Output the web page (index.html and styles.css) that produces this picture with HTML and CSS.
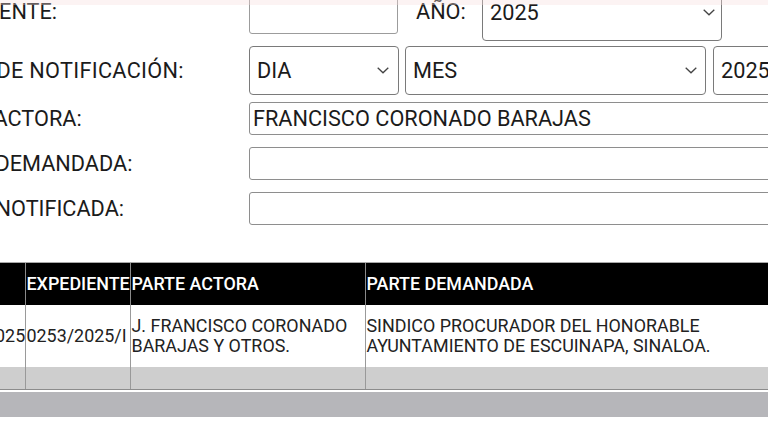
FILE: index.html
```html
<!DOCTYPE html>
<html lang="es">
<head>
<meta charset="utf-8">
<title>Notificaciones</title>
<link rel="stylesheet" href="styles.css">
</head>
<body>
<div class="topband"></div>
<div class="form">
  <div class="row row1">
    <div class="label l1">EXPEDIENTE:</div>
    <div class="input in-exp"></div>
    <div class="label-ano">AÑO:</div>
    <div class="select sel-ano"><span>2025</span><svg class="chev" width="12" height="7" viewBox="0 0 12 7"><polyline points="0.7,0.7 6,5.8 11.3,0.7" fill="none" stroke="#444" stroke-width="1.3"/></svg></div>
  </div>
  <div class="row row2">
    <div class="label l2">FECHA DE NOTIFICACIÓN:</div>
    <div class="select sel-dia"><span>DIA</span><svg class="chev" width="12" height="7" viewBox="0 0 12 7"><polyline points="0.7,0.7 6,5.8 11.3,0.7" fill="none" stroke="#444" stroke-width="1.3"/></svg></div>
    <div class="select sel-mes"><span>MES</span><svg class="chev" width="12" height="7" viewBox="0 0 12 7"><polyline points="0.7,0.7 6,5.8 11.3,0.7" fill="none" stroke="#444" stroke-width="1.3"/></svg></div>
    <div class="select sel-yr"><span>2025</span><svg class="chev" width="12" height="7" viewBox="0 0 12 7"><polyline points="0.7,0.7 6,5.8 11.3,0.7" fill="none" stroke="#444" stroke-width="1.3"/></svg></div>
  </div>
  <div class="row row3">
    <div class="label l3">PARTE ACTORA:</div>
    <div class="input wide">FRANCISCO CORONADO BARAJAS</div>
  </div>
  <div class="row row4">
    <div class="label">PARTE DEMANDADA:</div>
    <div class="input wide"></div>
  </div>
  <div class="row row5">
    <div class="label">PARTE NOTIFICADA:</div>
    <div class="input wide"></div>
  </div>
</div>
<table class="results">
  <colgroup>
    <col class="c1"><col class="c2"><col class="c3"><col class="c4"><col class="c5">
  </colgroup>
  <thead>
    <tr><th></th><th>EXPEDIENTE</th><th>PARTE ACTORA</th><th>PARTE DEMANDADA</th><th></th></tr>
  </thead>
  <tbody>
    <tr class="data">
      <td class="yr">2025</td>
      <td>0253/2025/I</td>
      <td>J. FRANCISCO CORONADO BARAJAS Y OTROS.</td>
      <td>SINDICO PROCURADOR DEL HONORABLE AYUNTAMIENTO DE ESCUINAPA, SINALOA.</td>
      <td></td>
    </tr>
    <tr class="empty"><td></td><td></td><td></td><td></td><td></td></tr>
  </tbody>
</table>
<div class="footbar"></div>
</body>
</html>
```

FILE: styles.css
```css
html, body {
  margin: 0;
  padding: 0;
  background: #ffffff;
  overflow: hidden;
  width: 768px;
  height: 432px;
}
body {
  font-family: Roboto, "Liberation Sans", sans-serif;
  color: #1b1b1b;
  position: relative;
}
.topband {
  position: absolute;
  left: 0;
  top: 0;
  width: 768px;
  height: 5px;
  background: rgba(246, 222, 222, 0.35);
  z-index: 5;
}
.form {
  margin-left: -74px;
  margin-top: -17px;
  font-size: 21.7px;
  width: 1000px;
}
.row {
  display: flex;
  align-items: center;
}
.label {
  width: 323px;
  flex: none;
  white-space: nowrap;
  line-height: 25px;
}
.row1 {
  height: 58px;
  align-items: flex-start;
}
.row1 .l1 {
  margin-top: 16px;
  text-indent: 1px;
}
.l2 {
  text-indent: -5px;
  letter-spacing: 0.3px;
}
.l3 {
  text-indent: -2px;
}
.in-exp {
  margin-top: 9px;
  width: 149px;
  height: 42px;
}
.label-ano {
  margin-left: 18px;
  margin-top: 16px;
  line-height: 25px;
  width: 66px;
  flex: none;
}
.sel-ano {
  width: 240px;
  height: 58px;
}
.row2 {
  margin-top: 5px;
  height: 49px;
}
.row3 {
  margin-top: 7px;
  height: 33px;
}
.row4, .row5 {
  margin-top: 12px;
  height: 33px;
}
.input {
  box-sizing: border-box;
  border: 1.5px solid #9c9c9c;
  border-radius: 3px;
  background: #fff;
  flex: none;
  display: flex;
  align-items: center;
  padding-left: 3px;
  white-space: nowrap;
}
.wide {
  width: 640px;
  height: 33px;
  border-color: #8e8e8e;
}
.select {
  box-sizing: border-box;
  border: 1px solid #7a7a7a;
  border-radius: 4px;
  background: #fff;
  flex: none;
  display: flex;
  align-items: center;
  justify-content: space-between;
  padding-left: 7px;
  padding-right: 7px;
}
.sel-ano {
  padding-right: 6px;
}
.sel-dia {
  width: 150px;
  height: 49px;
  padding-right: 9px;
}
.sel-mes {
  margin-left: 6px;
  width: 301px;
  height: 49px;
  padding-right: 8px;
}
.sel-yr {
  margin-left: 7px;
  width: 150px;
  height: 49px;
}
.chev {
  display: block;
  flex: none;
}
.results {
  margin-top: 37px;
  margin-left: -16px;
  border-collapse: collapse;
  table-layout: fixed;
  width: 950px;
  font-size: 17.9px;
  line-height: 20.5px;
}
.c1 { width: 41px; }
.c2 { width: 105px; }
.c3 { width: 235px; }
.c4 { width: 420px; }
.c5 { width: 149px; }
.results th {
  background: #000;
  color: #fff;
  font-weight: 500;
  font-size: 17.9px;
  text-align: left;
  height: 42px;
  padding: 0 0 0 1px;
  border-top: 1px solid #a8a8a8;
  border-left: 1px solid #8a8a8a;
  white-space: nowrap;
  overflow: hidden;
}
.results td {
  padding: 0 0 0 1px;
  border-left: 1px solid #9a9a9a;
  color: #222;
  vertical-align: middle;
}
.results tr > :first-child {
  border-left: none;
}
.data td {
  height: 62px;
  background: #fff;
}
.data td.yr {
  text-align: right;
  padding-right: 1px;
}
.empty td {
  height: 22px;
  background: #cecece;
  border-bottom: 1px solid #8c8c8c;
  border-left-color: #999;
}
.footbar {
  margin-top: 2px;
  height: 25px;
  background: #b6b6ba;
}
```
